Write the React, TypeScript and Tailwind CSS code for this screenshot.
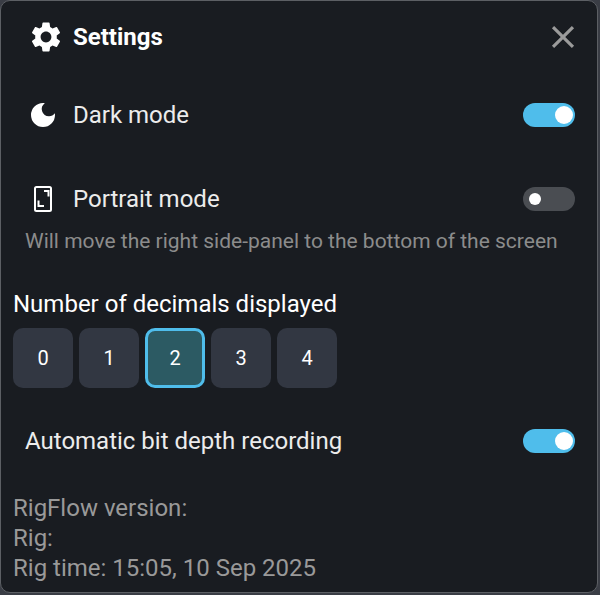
import { MdSettings, MdDarkMode, MdClose } from "react-icons/md";

function Toggle({ on }: { on: boolean }) {
  return on ? (
    <div className="flex h-6 w-[52px] items-center justify-end rounded-full bg-[#4fbdeb] pr-[2px]">
      <div className="h-[18px] w-[18px] rounded-full bg-white" />
    </div>
  ) : (
    <div className="flex h-6 w-[52px] items-center rounded-full bg-[#4a4d52] pl-[6px]">
      <div className="h-3 w-3 rounded-full bg-white" />
    </div>
  );
}

function PortraitIcon() {
  return (
    <svg width="18" height="26" viewBox="0 0 18 26" fill="none" className="text-white">
      <rect x="1" y="1" width="16" height="24" rx="1.5" stroke="currentColor" strokeWidth="2" />
      <path d="M10 4h5.5v6.5H13.5V6H10zM3.5 14.5h2v4.5H10v2H3.5z" fill="currentColor" />
    </svg>
  );
}

export default function App() {
  const decimals = [0, 1, 2, 3, 4];
  return (
    <div className="h-[595px] w-[600px] bg-[#3a3d45] font-['Roboto',sans-serif]">
      <div className="flex h-[593px] w-[598px] flex-col rounded-[10px] border border-[#5c5f64] bg-[#191c21] pl-3 pr-[22px]">
        <div className="flex h-[72px] items-center justify-between pl-4">
          <div className="flex items-center gap-[9px]">
            <MdSettings size={36} className="-ml-[1px] text-white" />
            <span className="text-2xl font-bold text-white">Settings</span>
          </div>
          <MdClose size={38} className="-mr-[7px] text-[#9b9b9b]" />
        </div>
        <div className="mt-[26px] flex h-8 items-center justify-between pl-[14px]">
          <div className="flex items-center gap-[14px]">
            <MdDarkMode size={32} className="text-white" />
            <span className="text-2xl text-[#ececec]">Dark mode</span>
          </div>
          <Toggle on />
        </div>
        <div className="mt-[52px] flex h-8 items-center justify-between pl-[14px]">
          <div className="flex items-center gap-[14px]">
            <div className="flex w-8 justify-center"><PortraitIcon /></div>
            <span className="text-2xl text-[#ececec]">Portrait mode</span>
          </div>
          <Toggle on={false} />
        </div>
        <p className="mt-[14px] pl-3 text-[21px] leading-6 text-[#8c8c8c]">
          Will move the right side-panel to the bottom of the screen
        </p>
        <p className="mt-[38px] text-2xl leading-[26px] text-white">Number of decimals displayed</p>
        <div className="mt-[11px] flex gap-[6px]">
          {decimals.map((d) => (
            <div
              key={d}
              className={
                d === 2
                  ? "flex h-[60px] w-[60px] items-center justify-center rounded-[10px] border-[3px] border-[#4fbdeb] bg-[#2c5a63] text-xl text-white"
                  : "flex h-[60px] w-[60px] items-center justify-center rounded-[10px] bg-[#323742] text-xl text-white"
              }
            >
              {d}
            </div>
          ))}
        </div>
        <div className="mt-[37px] flex h-8 items-center justify-between pl-3">
          <span className="text-2xl text-[#ececec]">Automatic bit depth recording</span>
          <Toggle on />
        </div>
        <div className="mt-[36px] text-2xl leading-[30px] text-[#999999]">
          <div>RigFlow version:</div>
          <div>Rig:</div>
          <div>Rig time: 15:05, 10 Sep 2025</div>
        </div>
      </div>
    </div>
  );
}
